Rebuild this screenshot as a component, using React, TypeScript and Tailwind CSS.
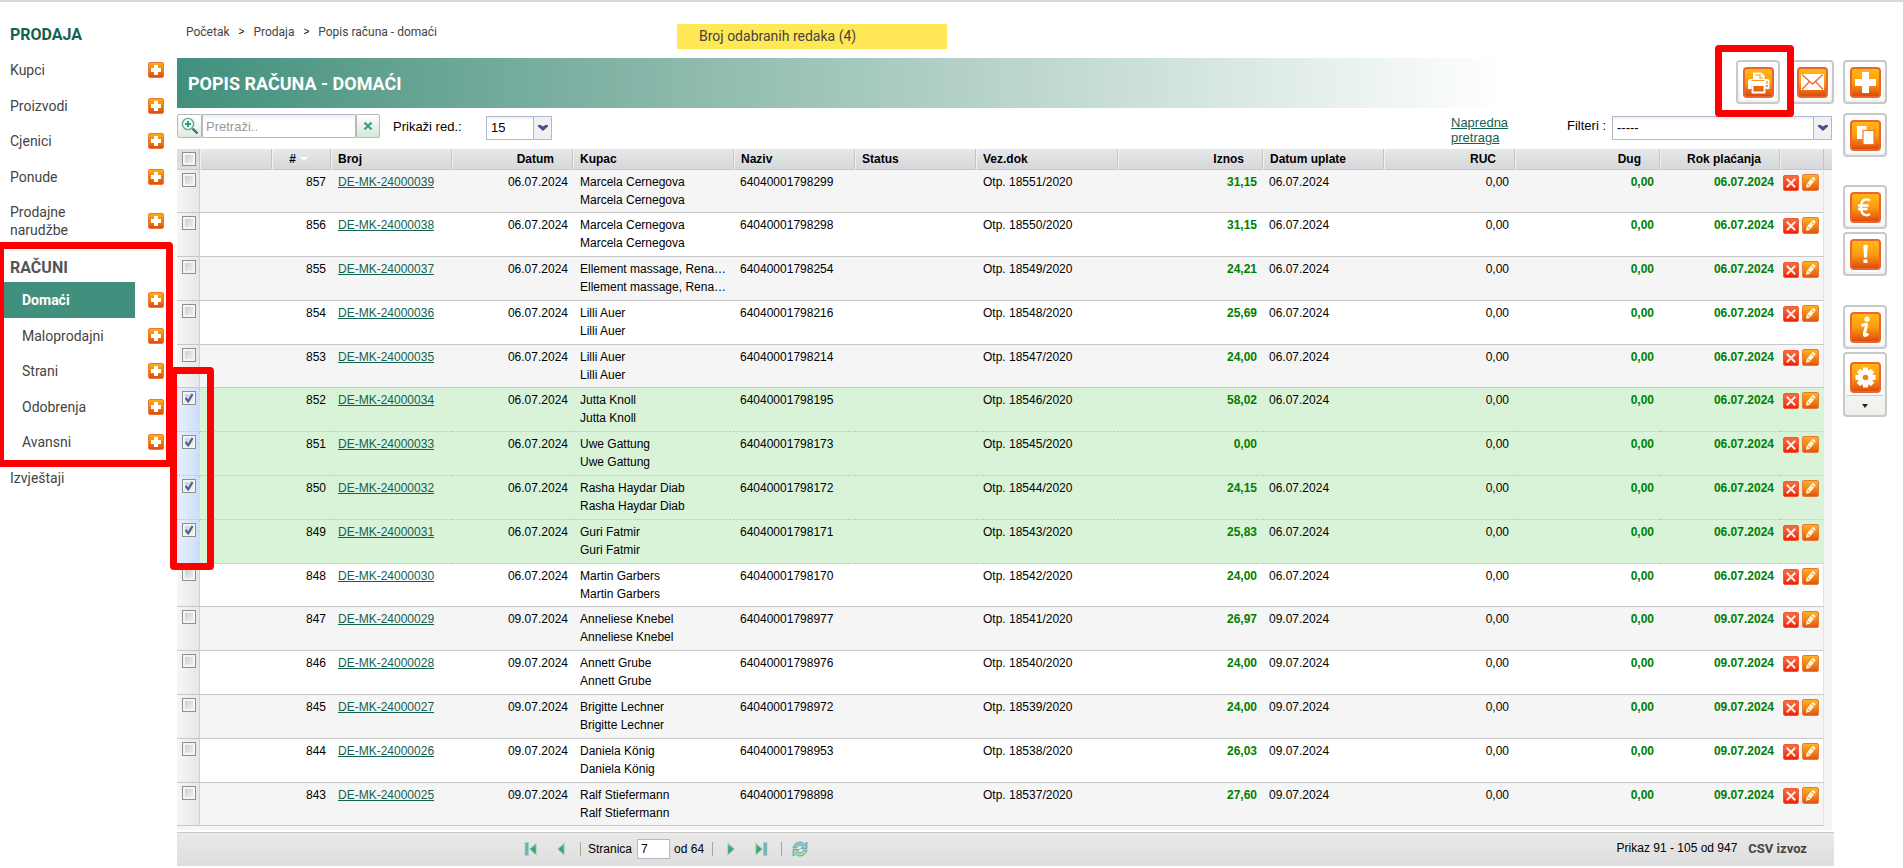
import { useState, type ReactNode } from 'react';
import clsx from 'clsx';

interface Invoice {
  no: number;
  code: string;
  date: string;
  customer: string;
  name: string;
  doc: string;
  amount: string;
  paid: string;
}

interface Column {
  label: string;
  width: number;
  right?: boolean;
}

const INVOICES: Invoice[] = [
  { no: 857, code: 'DE-MK-24000039', date: '06.07.2024', customer: 'Marcela Cernegova', name: '64040001798299', doc: 'Otp. 18551/2020', amount: '31,15', paid: '06.07.2024' },
  { no: 856, code: 'DE-MK-24000038', date: '06.07.2024', customer: 'Marcela Cernegova', name: '64040001798298', doc: 'Otp. 18550/2020', amount: '31,15', paid: '06.07.2024' },
  { no: 855, code: 'DE-MK-24000037', date: '06.07.2024', customer: 'Ellement massage, Rena…', name: '64040001798254', doc: 'Otp. 18549/2020', amount: '24,21', paid: '06.07.2024' },
  { no: 854, code: 'DE-MK-24000036', date: '06.07.2024', customer: 'Lilli Auer', name: '64040001798216', doc: 'Otp. 18548/2020', amount: '25,69', paid: '06.07.2024' },
  { no: 853, code: 'DE-MK-24000035', date: '06.07.2024', customer: 'Lilli Auer', name: '64040001798214', doc: 'Otp. 18547/2020', amount: '24,00', paid: '06.07.2024' },
  { no: 852, code: 'DE-MK-24000034', date: '06.07.2024', customer: 'Jutta Knoll', name: '64040001798195', doc: 'Otp. 18546/2020', amount: '58,02', paid: '06.07.2024' },
  { no: 851, code: 'DE-MK-24000033', date: '06.07.2024', customer: 'Uwe Gattung', name: '64040001798173', doc: 'Otp. 18545/2020', amount: '0,00', paid: '' },
  { no: 850, code: 'DE-MK-24000032', date: '06.07.2024', customer: 'Rasha Haydar Diab', name: '64040001798172', doc: 'Otp. 18544/2020', amount: '24,15', paid: '06.07.2024' },
  { no: 849, code: 'DE-MK-24000031', date: '06.07.2024', customer: 'Guri Fatmir', name: '64040001798171', doc: 'Otp. 18543/2020', amount: '25,83', paid: '06.07.2024' },
  { no: 848, code: 'DE-MK-24000030', date: '06.07.2024', customer: 'Martin Garbers', name: '64040001798170', doc: 'Otp. 18542/2020', amount: '24,00', paid: '06.07.2024' },
  { no: 847, code: 'DE-MK-24000029', date: '09.07.2024', customer: 'Anneliese Knebel', name: '64040001798977', doc: 'Otp. 18541/2020', amount: '26,97', paid: '09.07.2024' },
  { no: 846, code: 'DE-MK-24000028', date: '09.07.2024', customer: 'Annett Grube', name: '64040001798976', doc: 'Otp. 18540/2020', amount: '24,00', paid: '09.07.2024' },
  { no: 845, code: 'DE-MK-24000027', date: '09.07.2024', customer: 'Brigitte Lechner', name: '64040001798972', doc: 'Otp. 18539/2020', amount: '24,00', paid: '09.07.2024' },
  { no: 844, code: 'DE-MK-24000026', date: '09.07.2024', customer: 'Daniela König', name: '64040001798953', doc: 'Otp. 18538/2020', amount: '26,03', paid: '09.07.2024' },
  { no: 843, code: 'DE-MK-24000025', date: '09.07.2024', customer: 'Ralf Stiefermann', name: '64040001798898', doc: 'Otp. 18537/2020', amount: '27,60', paid: '09.07.2024' },
];

const COLUMNS: Column[] = [
  { label: '', width: 72 },
  { label: '#', width: 59, right: true },
  { label: 'Broj', width: 121 },
  { label: 'Datum', width: 121, right: true },
  { label: 'Kupac', width: 161 },
  { label: 'Naziv', width: 121 },
  { label: 'Status', width: 121 },
  { label: 'Vez.dok', width: 142 },
  { label: 'Iznos', width: 145, right: true },
  { label: 'Datum uplate', width: 121 },
  { label: 'RUC', width: 131, right: true },
  { label: 'Dug', width: 145, right: true },
  { label: 'Rok plaćanja', width: 120, right: true },
  { label: '', width: 44 },
];

const MENU = ['Kupci', 'Proizvodi', 'Cjenici', 'Ponude'];
const SUBMENU = ['Domaći', 'Maloprodajni', 'Strani', 'Odobrenja', 'Avansni'];

function AddButton({ label }: { label: string }) {
  return (
    <button
      aria-label={`Dodaj: ${label}`}
      className="flex size-4 shrink-0 items-center justify-center rounded-xs border border-[#e9793a] bg-linear-to-b from-[#ffae12] to-[#df4a0c]"
    >
      <svg viewBox="0 0 14 14" className="size-[14px]">
        <path d="M5 2h4v3h3v4H9v3H5V9H2V5h3z" fill="#fff" />
      </svg>
    </button>
  );
}

function OrangeTile({ children }: { children: ReactNode }) {
  return (
    <span className="flex size-9 items-center justify-center bg-white">
      <span className="flex size-[31px] items-center justify-center rounded-sm border-2 border-[#ea6630] bg-linear-to-b from-[#ffb912] via-[#fc9a12] to-[#dc4a0c]">
        <svg viewBox="0 0 27 27" className="size-[27px]">{children}</svg>
      </span>
    </span>
  );
}

function ToolButton({ label, children }: { label: string; children: ReactNode }) {
  return (
    <button
      aria-label={label}
      className="flex size-11 shrink-0 items-center justify-center rounded-sm border-2 border-[#c9c9c9] bg-linear-to-b from-white to-[#f0f1ee]"
    >
      <OrangeTile>{children}</OrangeTile>
    </button>
  );
}

function Checkbox({ label, checked, onChange }: { label: string; checked: boolean; onChange: () => void }) {
  return (
    <label className="relative block size-[14px]">
      <input
        type="checkbox"
        aria-label={label}
        checked={checked}
        onChange={onChange}
        className="peer block size-[14px] appearance-none border border-[#8e8f8f] bg-linear-to-br from-[#c3c7cf] to-[#f6f6f6] shadow-[inset_0_0_0_2px_#f4f4f4]"
      />
      <svg viewBox="0 0 14 14" className="pointer-events-none absolute inset-0 hidden size-[14px] peer-checked:block">
        <path d="M3.6 6.8l2.6 3.6L10.6 3" fill="none" stroke="#4a5f97" strokeWidth="2.1" />
      </svg>
    </label>
  );
}

function Select({ id, options, className }: { id: string; options: string[]; className: string }) {
  return (
    <span className={clsx('relative flex h-6 border border-[#b5b8c8] bg-white', className)}>
      <select id={id} className="w-full appearance-none bg-linear-to-b from-[#eef0f0] to-white to-20% pr-5 pl-1 text-[13px] leading-4 outline-none">
        {options.map((o) => <option key={o}>{o}</option>)}
      </select>
      <span className="pointer-events-none absolute inset-y-0 right-0 flex w-[18px] items-center justify-center border-l border-[#b5b8c8] bg-[#eff0f0]">
        <svg viewBox="0 0 10 6" className="h-[6px] w-[10px]">
          <path d="M0 0h2.6L5 1.6 7.4 0H10v1.6L5 6 0 1.6z" fill="#3a5591" />
        </svg>
      </span>
    </span>
  );
}

function PagerButton({ label, children }: { label: string; children: ReactNode }) {
  return (
    <button aria-label={label} className="flex size-4 items-center justify-center">
      <svg viewBox="0 0 16 16" className="size-4">{children}</svg>
    </button>
  );
}

function PagerArrow({ flip, bar }: { flip?: boolean; bar?: boolean }) {
  return (
    <g transform={flip ? 'translate(16 0) scale(-1 1)' : undefined}>
      {bar && <rect x="2" y="1.5" width="3.5" height="13" fill="#6fb3b8" stroke="#9ccfc9" strokeWidth=".6" />}
      <path d="M13.5 1.5v13L6.2 8z" fill="#8fcf95" />
      <path d="M12.5 4v8.400L7.600 8z" fill="#3f97b4" />
      <path d="M12.500 8v5L7.600 8z" fill="#3fae49" />
    </g>
  );
}

function Sidebar() {
  return (
    <aside className="relative w-[177px] shrink-0 pt-4 text-sm text-[#444]">
      <h2 className="pl-[10px] text-base leading-[34px] font-bold text-[#12624f]">PRODAJA</h2>
      <ul>
        {MENU.map((m) => (
          <li key={m} className="flex h-9 items-center justify-between pr-[13px] pl-[10px] even:h-[35px]">
            <a href="#">{m}</a>
            <AddButton label={m} />
          </li>
        ))}
        <li className="flex h-[54px] items-center justify-between pr-[13px] pl-[10px]">
          <a href="#" className="w-20 leading-[18px]">Prodajne narudžbe</a>
          <AddButton label="Prodajne narudžbe" />
        </li>
      </ul>
      <h3 className="pt-[6px] pl-[10px] text-base leading-7 font-bold text-[#555]">RAČUNI</h3>
      <ul>
        {SUBMENU.map((m, i) => (
          <li key={m} className="flex h-9 items-center justify-between pr-[13px] even:h-[35px]">
            <a
              href="#"
              className={clsx('flex h-full w-[135px] items-center pl-[22px]', i === 0 && 'bg-[#40907d] font-bold text-white')}
            >
              {m}
            </a>
            <AddButton label={m} />
          </li>
        ))}
      </ul>
      <a href="#" className="flex h-[35px] items-center pl-[10px]">Izvještaji</a>

      {/* Markers around the invoice menu and the ticked rows */}
      <div className="pointer-events-none absolute top-[240px] -left-[3px] z-10 h-[225px] w-[176px] rounded-sm border-7 border-[#f00]" />
      <div className="pointer-events-none absolute top-[365px] left-[170px] z-10 h-[203px] w-[44px] rounded-sm border-7 border-[#f00]" />
    </aside>
  );
}

function InvoiceTable() {
  const [selected, setSelected] = useState<number[]>([852, 851, 850, 849]);
  const toggle = (no: number) =>
    setSelected((s) => (s.includes(no) ? s.filter((n) => n !== no) : [...s, no]));
  const allSelected = selected.length === INVOICES.length;

  return (
    <table className="w-full table-fixed border-separate border-spacing-0 text-xs leading-[18px] text-black">
      <colgroup>
        <col style={{ width: 23 }} />
        {COLUMNS.map((c, i) => <col key={i} style={{ width: c.width }} />)}
        <col style={{ width: 8 }} />
      </colgroup>
      <thead>
        <tr className="h-[21px] bg-linear-to-b from-[#e7e8e9] to-[#d4d6d9] text-left *:border-b *:border-b-[#c8c8c8] *:p-0 *:font-bold">
          <th className="border-r border-r-[#c5c5c5] bg-[#dcdde0]">
            <span className="flex pl-[5px]">
              <Checkbox label="Odaberi sve" checked={allSelected} onChange={() => setSelected(allSelected ? [] : INVOICES.map((r) => r.no))} />
            </span>
          </th>
          {COLUMNS.map((c, i) => (
            <th key={i} className={clsx('border-r border-l border-r-[#c5c5c5] border-l-[#f1f1f1]', c.right && 'text-right')}>
              {c.label === '#' ? (
                <span className="flex items-center justify-end gap-1 pr-[22px]">
                  #
                  <svg viewBox="0 0 8 4" className="h-1 w-2"><path d="M0 0h8L4 4z" fill="#fff" /></svg>
                </span>
              ) : (
                <span className={clsx('block', c.right ? 'pr-[18px]' : 'pl-[6px]')}>{c.label}</span>
              )}
            </th>
          ))}
          <th />
        </tr>
      </thead>
      <tbody>
        {INVOICES.map((r) => {
          const on = selected.includes(r.no);
          return (
            <tr
              key={r.no}
              className={clsx(
                'h-11 align-top first:h-[43px] nth-[5n]:h-[43px] *:border-b *:py-0 *:pt-[3px]',
                on ? 'bg-[#d9f3d9] *:border-dotted *:border-[#b4c9b4]' : 'bg-white odd:bg-[#f5f5f5] *:border-[#c8c8c8]',
              )}
            >
              <td className={clsx('border-r pl-[5px]', on ? 'bg-linear-to-r from-[#e8f0fd] to-[#cbdff9] border-r-[#a9c7f0]!' : 'bg-linear-to-r from-[#f6f6f6] to-[#e6e7e8] border-r-[#d0d0d0]!')}>
                <Checkbox label={`Odaberi ${r.no}`} checked={on} onChange={() => toggle(r.no)} />
              </td>
              <td />
              <td className="pr-[5px] text-right">{r.no}</td>
              <td className="pl-[7px]"><a href="#" className="text-[#12624f] underline">{r.code}</a></td>
              <td className="pr-[5px] text-right">{r.date}</td>
              <td className="pl-[7px] whitespace-nowrap">{r.customer}<br />{r.customer}</td>
              <td className="pl-[6px]">{r.name}</td>
              <td />
              <td className="pl-[7px]">{r.doc}</td>
              <td className="pr-[6px] text-right font-bold text-[#008000]">{r.amount}</td>
              <td className="pl-[6px]">{r.paid}</td>
              <td className="pr-[6px] text-right">0,00</td>
              <td className="pr-[6px] text-right font-bold text-[#008000]">0,00</td>
              <td className="pr-[6px] text-right font-bold text-[#008000]">{r.date}</td>
              <td className="border-r border-r-[#e2e2e2]! pl-[3px]">
                <span className="flex h-[19px] items-center gap-[3px]">
                  <button aria-label="Obriši" className="flex size-4 items-center justify-center rounded-xs border border-[#ef5a35] bg-linear-to-b from-[#fa6a3c] to-[#f01c06]">
                    <svg viewBox="0 0 14 14" className="size-[14px]">
                      <path d="M2.8 2.8l8.4 8.4M11.2 2.8l-8.4 8.4" stroke="#fff0e8" strokeWidth="2" />
                    </svg>
                  </button>
                  <button aria-label="Uredi" className="flex size-[17px] items-center justify-center rounded-xs border border-[#e9793a] bg-linear-to-b from-[#ffb31a] to-[#e0560e]">
                    <svg viewBox="0 0 15 15" className="size-[15px]">
                      <path d="M3 12.8l.7-4L9 2.400q1-1 2 0l1 .9q1 1 0 2L6.600 12z" fill="#fff3dc" />
                      <path d="M4.400 8.600l2.400 2.400M8.400 3.800l3 2.600" stroke="#ee8e22" />
                    </svg>
                  </button>
                </span>
              </td>
              <td className="border-b-0! bg-[#f5f5f5]" />
            </tr>
          );
        })}
      </tbody>
    </table>
  );
}

function Pager() {
  return (
    <footer className="flex h-[34px] items-center border-t border-[#c8c8c8] bg-linear-to-b from-[#e9e9e9] to-[#dedede] pr-[27px] pb-[2px] pl-[346px] text-xs text-black">
      <div className="flex items-center">
        <PagerButton label="Prva stranica"><PagerArrow bar /></PagerButton>
        <span className="w-3" />
        <PagerButton label="Prethodna stranica"><PagerArrow /></PagerButton>
        <span className="mr-[7px] ml-[13px] h-[14px] w-px bg-[#a5a596]" />
        <label htmlFor="page">Stranica</label>
        <input id="page" defaultValue="7" className="mr-1 ml-[5px] h-5 w-[33px] border border-[#b5b8c8] bg-white px-[3px] outline-none" />
        <span>od 64</span>
        <span className="mr-3 ml-2 h-[14px] w-px bg-[#a5a596]" />
        <PagerButton label="Sljedeća stranica"><PagerArrow flip /></PagerButton>
        <span className="w-3" />
        <PagerButton label="Zadnja stranica"><PagerArrow flip bar /></PagerButton>
        <span className="mr-[10px] ml-3 h-[14px] w-px bg-[#a5a596]" />
        <PagerButton label="Osvježi">
          <path d="M1 7C1.600 3 5 1 8 1c2 0 3.500.8 4.600 2L15 1v6.500H8.800l2.200-2C9 3.600 5.500 3.800 4.500 7z" fill="#8cc9c4" stroke="#4f9aa8" strokeWidth=".7" />
          <path d="M15 9c-.6 4-4 6-7 6-2 0-3.500-.8-4.600-2L1 15V8.500h6.200l-2.200 2c2 1.900 5.500 1.700 6.500-1.500z" fill="#a3d8a8" stroke="#4f9a8a" strokeWidth=".7" />
        </PagerButton>
      </div>
      <div className="ml-auto flex items-center gap-[11px]">
        <span>Prikaz 91 - 105 od 947</span>
        <a href="#" className="font-[Roboto,sans-serif] text-[13px] font-bold text-[#444]">CSV izvoz</a>
      </div>
    </footer>
  );
}

export default function App() {
  return (
    <div className="border-t-2 border-[#d9d9d9] bg-white font-[Roboto,sans-serif]">
      <div className="flex overflow-x-clip">
        <Sidebar />

        <main className="min-w-0 flex-1 font-['Liberation_Sans',Arial,sans-serif]">
          <div className="flex h-14 items-start pt-[22px]">
            <nav className="flex w-[500px] shrink-0 gap-[9px] pl-[9px] font-[Roboto,sans-serif] text-xs leading-4 text-[#444]">
              <a href="#">Početak</a>
              <span className="font-['Liberation_Sans',Arial,sans-serif] text-[10px] text-black">&gt;</span>
              <a href="#">Prodaja</a>
              <span className="font-['Liberation_Sans',Arial,sans-serif] text-[10px] text-black">&gt;</span>
              <a href="#">Popis računa - domaći</a>
            </nav>
            <p className="h-[25px] w-[270px] bg-[#ffe755] pl-[22px] font-[Roboto,sans-serif] text-sm leading-6 text-[#444]">
              Broj odabranih redaka (4)
            </p>
          </div>

          <header className="relative flex h-[50px] items-start justify-between bg-linear-to-r from-[#40907d] to-white to-80% pt-[2px] pl-[11px]">
            <h1 className="font-[Roboto,sans-serif] text-lg leading-12 font-bold text-white">POPIS RAČUNA - DOMAĆI</h1>
            <div className="flex gap-[10px]">
              <ToolButton label="Ispis">
                <path d="M8 3.500h8.500l3 3V10h3q2 0 2 2v8h-4v-4h-14v4H3v-8q0-2 2-2h3z" fill="#fff" />
                <path d="M10.500 6h4.500v3h3M6.500 11.500h13" fill="none" stroke="#f79a1b" strokeWidth="1.200" />
                <path d="M7.500 16h12v7.500h-12z" fill="#e8650f" stroke="#fff" strokeWidth="1.800" />
                <path d="M22 12.500v2M22 16v2" stroke="#f08a1b" strokeWidth="1.600" />
              </ToolButton>
              <ToolButton label="Pošalji e-mail">
                <path d="M2 5h23v16H2z" fill="#fff" />
                <path d="M3 5.500l10.500 9.500 10.500-9.500M3 20.500l7.500-8M24 20.500l-7.500-8" fill="none" stroke="#ec6a26" strokeWidth="1.300" />
              </ToolButton>
            </div>
            <div className="pointer-events-none absolute -top-[13px] right-10 z-10 h-[72px] w-[79px] rounded-sm border-7 border-[#f00]" />
          </header>

          <div className="flex h-[41px] items-start pt-[6px] pr-[2px] text-[13px] leading-[15px] text-black">
            <button aria-label="Pretraži" className="flex h-6 w-[25px] items-center justify-center rounded-xs border border-[#b9b9b9] bg-linear-to-b from-white to-[#e3e9df]">
              <svg viewBox="0 0 18 18" className="size-[18px]">
                <path d="M11.500 11.500l5 5" stroke="#4b6a62" strokeWidth="2.400" />
                <circle cx="7" cy="7" r="5.600" fill="#e9f7f0" stroke="#6aa894" strokeWidth="1.400" />
                <path d="M7 4v6M4 7h6" stroke="#2fa36b" strokeWidth="2" />
              </svg>
            </button>
            <input
              aria-label="Pretraži"
              placeholder="Pretraži.."
              className="h-6 w-[154px] border border-[#b5b8c8] bg-linear-to-b from-[#eef1f0] to-white to-25% px-[3px] text-[13px] outline-none placeholder:text-[#999]"
            />
            <button aria-label="Očisti" className="flex size-6 items-center justify-center rounded-xs border border-[#b9b9b9] bg-linear-to-b from-white to-[#d3e8d6]">
              <svg viewBox="0 0 10 10" className="size-[10px]">
                <path d="M1.500 1.500l7 7M8.500 1.500l-7 7" stroke="#3f9f96" strokeWidth="2.400" />
              </svg>
            </button>
            <label htmlFor="rows" className="w-[106px] pt-[5px] pl-[13px]">Prikaži red.:</label>
            <Select id="rows" options={['15', '30', '50', '100']} className="mt-[2px] w-[66px]" />

            <a href="#" className="ml-auto w-[58px] pt-[1px] text-[#12624f] underline">Napredna pretraga</a>
            <label htmlFor="filter" className="w-[103px] pt-1 pl-[58px] whitespace-nowrap">Filteri :</label>
            <Select id="filter" options={['-----']} className="mt-[2px] w-[220px]" />
          </div>

          <div className="mr-[2px] bg-[#f5f5f5] pb-1">
            <InvoiceTable />
          </div>
          <div className="pt-[2px]">
            <Pager />
          </div>
        </main>

        <div className="flex w-[69px] shrink-0 flex-col items-start pt-[58px] pl-[9px]">
          <ToolButton label="Novi račun">
            <path d="M10 3h7v7h7v7h-7v7h-7v-7H3v-7h7z" fill="#fff" />
          </ToolButton>
          <div className="mt-[9px]">
            <ToolButton label="Kopiraj">
              <path d="M5 4h9.500v13H5z" fill="#fff" />
              <path d="M11 8.500h11v14H11z" fill="#fff" stroke="#ee7a25" strokeWidth="1.200" />
            </ToolButton>
          </div>
          <div className="mt-7 flex flex-col gap-[3px]">
            <ToolButton label="Plaćanja">
              <path d="M18 6.500Q16.500 5.400 14.500 5.400c-4 0-5.500 3.400-5.500 7.900s1.700 7.900 5.500 7.900q2 0 3.500-1.200M6 11.500h10.500M6 15h9.500" fill="none" stroke="#fff" strokeWidth="2.400" />
            </ToolButton>
            <ToolButton label="Upozorenja">
              <path d="M11.300 4h4.400l-.7 12.500h-3zM11.500 18.500h4V22h-4z" fill="#fff" />
            </ToolButton>
          </div>
          <div className="mt-[29px] flex flex-col gap-[3px]">
            <ToolButton label="Informacije">
              <circle cx="15" cy="5.200" r="2.600" fill="#fff" />
              <path d="M9.500 11.800q3-1.800 5-1.600-.3 3.500-1.800 8-.8 3.400.5 3.200t3-1.800" fill="none" stroke="#fff" strokeWidth="3" strokeLinejoin="round" />
            </ToolButton>
            <button aria-label="Postavke" className="flex h-[65px] w-11 flex-col items-center rounded-sm border-2 border-[#c9c9c9] bg-linear-to-b from-white to-[#eef0ec] pt-[5px]">
              <OrangeTile>
                <g fill="#fff">
                  <circle cx="13.500" cy="13.500" r="7.800" />
                  <path d="M11 3.500h5v20h-5zM3.500 11h20v5h-20z" />
                  <path d="M11 3.500h5v20h-5zM3.500 11h20v5h-20z" transform="rotate(45 13.500 13.500)" />
                </g>
                <circle cx="13.500" cy="13.500" r="2.800" fill="#f0801a" />
              </OrangeTile>
              <span className="flex w-9 flex-1 items-center justify-center border-t border-[#c9c9c9]">
                <svg viewBox="0 0 6 4" className="h-1 w-[6px]"><path d="M0 0h6L3 4z" fill="#222" /></svg>
              </span>
            </button>
          </div>
        </div>
      </div>
    </div>
  );
}
